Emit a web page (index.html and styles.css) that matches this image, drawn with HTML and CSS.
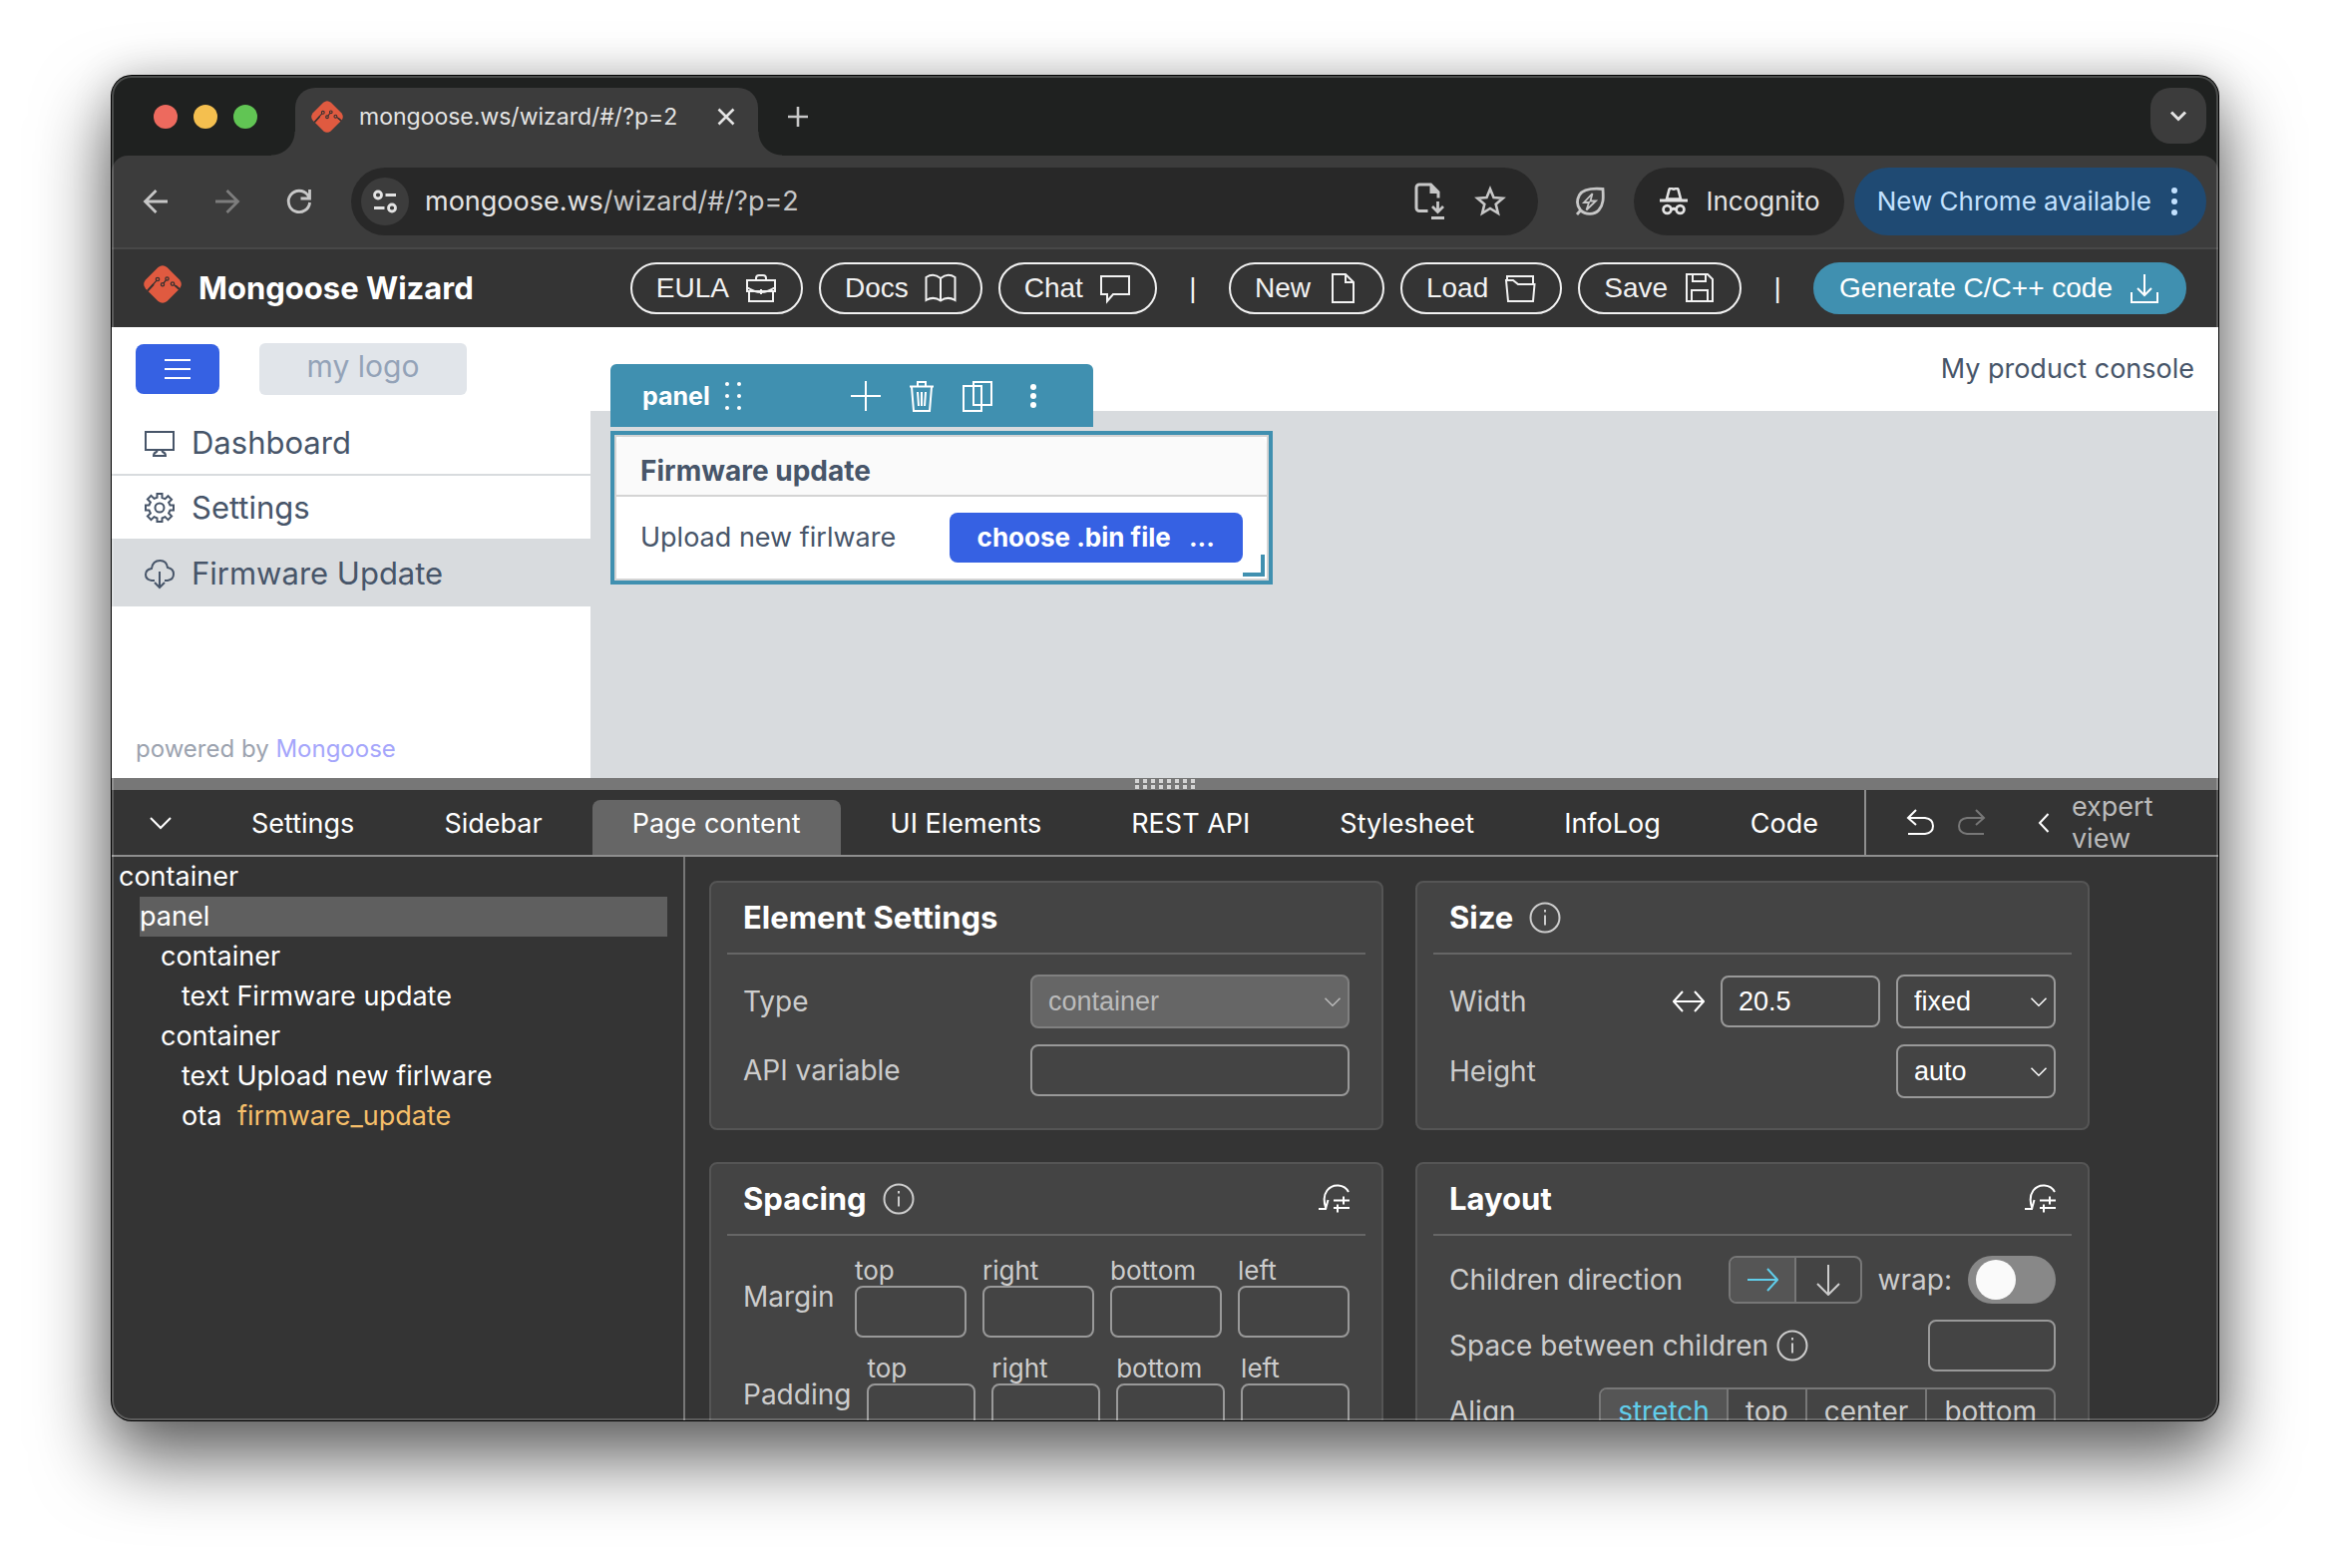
FILE: index.html
```html
<!DOCTYPE html>
<html lang="en">
<head>
<meta charset="utf-8">
<title>Mongoose Wizard</title>
<link rel="stylesheet" href="styles.css">
</head>
<body>
<svg class="sprite" aria-hidden="true">
  <symbol id="i-mongoose" viewBox="0 0 38 38">
    <path d="M14.500 2q4.500-3.600 9 0L36 14.500q3.600 4.500 0 9L23.500 36q-4.500 3.600-9 0L2 23.500q-3.600-4.500 0-9z" fill="#e05a40"/>
    <g fill="none" stroke="#3a3230" stroke-width="1.300">
      <path d="M4 25.500 12.800 15.300M20 18l2.400-3.200M30.500 19.500l5 4.500"/>
      <path d="M4 25.500l6-6.500M32 20.500l4 3.500" stroke-width="1.900"/>
      <circle cx="14" cy="14" r="1.700"/><circle cx="19" cy="19.300" r="1.600"/><circle cx="23.500" cy="13.400" r="1.600"/><circle cx="29" cy="18.600" r="1.700"/>
    </g>
  </symbol>
  <symbol id="i-info" viewBox="0 0 32 32"><g fill="none" stroke="currentColor" stroke-width="2"><circle cx="16" cy="16" r="14.500"/><path d="M16 13.500V23.500M16 8v2.500"/></g></symbol>
  <symbol id="i-reset" viewBox="0 0 32 32"><path d="M31 9C27 1 15 0 9.500 7.500 5.500 13 6 19 8.500 26M1 26h7l2.500-9M16 17.500h16M26 13.500v8M16 25h16M20 21.500v8" fill="none" stroke="currentColor" stroke-width="2"/></symbol>
  <symbol id="i-chev" viewBox="0 0 24 14"><path d="M2 2l10 10L22 2" fill="none" stroke="currentColor" stroke-width="2"/></symbol>
</svg>

<div class="window">
  <div class="chrome">
  <header class="tabstrip">
    <div class="lights"><span class="light red"></span><span class="light yellow"></span><span class="light green"></span></div>
    <div class="browser-tab">
      <svg class="s32"><use href="#i-mongoose"/></svg>
      <span class="tab-title">mongoose.ws/wizard/#/?p=2</span>
      <button class="plain" aria-label="Close tab"><svg class="s24" viewBox="0 0 24 24"><path d="M4.500 4.500l15 15M19.500 4.500l-15 15" stroke="#e3e3e3" stroke-width="2.600"/></svg></button>
    </div>
    <button class="plain new-tab" aria-label="New tab"><svg class="s24" viewBox="0 0 24 24"><path d="M2 12h20M12 2v20" stroke="#c7c7c7" stroke-width="2.600"/></svg></button>
    <button class="tab-search" aria-label="Search tabs"><svg class="s24" viewBox="0 0 24 24"><path d="M5 8.500l7 7 7-7" fill="none" stroke="#e3e3e3" stroke-width="3"/></svg></button>
  </header>

  <div class="toolbar">
    <nav class="nav-buttons">
      <button class="plain" aria-label="Back"><svg class="s32" viewBox="0 0 32 32"><path d="M28 16H6M16.500 5L5.500 16l11 11" fill="none" stroke="#c7c7c7" stroke-width="2.800"/></svg></button>
      <button class="plain" aria-label="Forward"><svg class="s32" viewBox="0 0 32 32"><path d="M4 16h22M15.500 5l11 11-11 11" fill="none" stroke="#7d7d7d" stroke-width="2.800"/></svg></button>
      <button class="plain" aria-label="Reload"><svg class="s32" viewBox="0 0 32 32"><path d="M26.600 17A10.700 10.700 0 1 1 24.500 9.500L26 12M26.500 4v9h-9" fill="none" stroke="#c7c7c7" stroke-width="2.800"/></svg></button>
    </nav>
    <div class="omnibox">
      <button class="site-info" aria-label="Site information"><svg class="s28" viewBox="0 0 28 28"><g fill="none" stroke="#e3e3e3" stroke-width="2.800"><circle cx="7" cy="7.500" r="3.500"/><path d="M14.500 7.500H25M3 20.500h10.500"/><circle cx="21" cy="20.500" r="3.500"/></g></svg></button>
      <span class="url">mongoose.ws<span class="url-path">/wizard/#/?p=2</span></span>
      <button class="plain" aria-label="Install page"><svg class="page-icon" viewBox="0 0 32 38"><path d="M14.500 28.600H6a3 3 0 0 1-3-3V5a3 3 0 0 1 3-3h11.500l7.500 7.500v6" fill="none" stroke="#c7c7c7" stroke-width="3"/><path d="M16.500 1v10H26z" fill="#c7c7c7"/><path d="M24.500 19v10M19 24l5.500 5.500L30 24M18 35.500h13" fill="none" stroke="#c7c7c7" stroke-width="2.800"/></svg></button>
      <button class="plain" aria-label="Bookmark"><svg class="s32" viewBox="0 0 32 32"><path d="M16 3.500l3.500 8.600 9.200.7-7 6 2.200 9L16 23l-7.900 4.800 2.200-9-7-6 9.200-.7z" fill="none" stroke="#c7c7c7" stroke-width="2.600"/></svg></button>
    </div>
    <button class="plain saver" aria-label="Energy saver"><svg class="s32" viewBox="0 0 32 32"><g fill="none" stroke="#c7c7c7" stroke-width="2.800"><path d="M29 3.500c-12-1-20 0-23.500 6C2 16 4 21.500 6.500 24.500c5 5.500 14 5 18.500 0 5-6 4.500-12 4-21zM3 29l4-4.500"/></g><path d="M18.500 8L10 17h5l-2.500 7.500L22 15.500h-5.500z" fill="none" stroke="#c7c7c7" stroke-width="1.800"/></svg></button>
    <div class="incognito"><svg class="s28" viewBox="0 0 28 28"><path d="M7 11.500L9.500 2q.6-1.600 2.300-1l2.200.7 2.200-.7q1.700-.6 2.300 1L21 11.500z" fill="none" stroke="#e3e3e3" stroke-width="2.600"/><g fill="none" stroke="#e3e3e3" stroke-width="2.800"><path d="M0 13h28M11.500 22q2.500-1.500 5 0"/><circle cx="7.500" cy="22" r="3.900"/><circle cx="20.500" cy="22" r="3.900"/></g></svg><span>Incognito</span></div>
    <button class="update">New Chrome available<svg class="dots3" viewBox="0 0 8 28"><g fill="#c2e1ff"><circle cx="4" cy="3" r="3"/><circle cx="4" cy="14" r="3"/><circle cx="4" cy="25" r="3"/></g></svg></button>
  </div>
  </div>

  <header class="app-header">
    <svg class="s38 brand"><use href="#i-mongoose"/></svg>
    <h1>Mongoose Wizard</h1>
    <div class="actions">
      <button class="pill">EULA<svg class="s32 line" viewBox="0 0 32 32"><path d="M2 8h28v11H2zM4 19v10h24V19M11 8V6q0-3 3-3h4q3 0 3 3v2M2 15q14 10 28 0M16 17v5"/></svg></button>
      <button class="pill">Docs<svg class="s32 line" viewBox="0 0 32 32"><path d="M16 6Q9 0 1.500 5v23Q9 23.500 16 28.500 23 23.500 30.500 28V5Q23 0 16 6zV28"/></svg></button>
      <button class="pill">Chat<svg class="s32 line" viewBox="0 0 32 32"><path d="M2 4h28v18H14l-6 7v-7H2z"/></svg></button>
      <span class="bar">|</span>
      <button class="pill">New<svg class="s32 line" viewBox="0 0 32 32"><path d="M6 2h13l8 8v20H6zM19 2v8h8"/></svg></button>
      <button class="pill">Load<svg class="s32 line" viewBox="0 0 32 32"><path d="M3 8V4h26v7M2 8h7l5 4h16.500L29 29H4z"/></svg></button>
      <button class="pill">Save<svg class="s32 line" viewBox="0 0 32 32"><path d="M3 2h21l5 5v22H3zM9 2v7h13V2M8 29V18h16v11"/></svg></button>
      <span class="bar">|</span>
      <button class="pill primary">Generate C/C++ code<svg class="s32 line" viewBox="0 0 32 32"><path d="M16 2v21M9 16l7 7 7-7M3 20v10h26V20"/></svg></button>
    </div>
  </header>

  <section class="preview">
    <div class="preview-side">
      <div class="side-top">
        <button class="menu-btn" aria-label="Menu"><svg class="s28" viewBox="0 0 28 28"><path d="M1 5h26M1 14h26M1 23h26" stroke="#fff" stroke-width="2"/></svg></button>
        <div class="logo-box">my logo</div>
      </div>
      <nav class="side-nav">
        <a href="#dashboard"><svg class="s32 line" viewBox="0 0 32 32"><path d="M2 5h28v18H2zM10 29q0-3 3-4l1-2h4l1 2q3 1 3 4z"/></svg>Dashboard</a>
        <a href="#settings"><svg class="s32 line" viewBox="0 0 32 32"><path d="M13.500 2h5v4l3 1.200 3-3 3.600 3.600-3 3L26.500 13.500H30v5h-3.500l-1.400 3 3 3-3.600 3.600-3-3-3 1.400V30h-5v-3.500l-3-1.400-3 3-3.600-3.600 3-3-1.400-3H2v-5h3.500l1.400-3-3-3 3.600-3.600 3 3 3-1.200z"/><circle cx="16" cy="16" r="4.500"/></svg>Settings</a>
        <a href="#update" class="active"><svg class="s32 line" viewBox="0 0 32 32"><path d="M11 23H8Q2 22 2 17q0-5 6-6 1-8 8.500-8Q23 3 24 10q6 1 6 6.500Q30 22 24 23h-3M16 14v16M11 25l5 5 5-5"/></svg>Firmware Update</a>
      </nav>
      <p class="powered">powered by <a href="#mongoose">Mongoose</a></p>
    </div>
    <div class="preview-main">
      <div class="console-bar">My product console</div>
      <div class="canvas">
        <div class="selected">
          <div class="el-toolbar">
            <b>panel</b>
            <svg class="grip" viewBox="0 0 20 32"><g fill="#fff"><circle cx="4" cy="4" r="2"/><circle cx="16" cy="4" r="2"/><circle cx="4" cy="16" r="2"/><circle cx="16" cy="16" r="2"/><circle cx="4" cy="28" r="2"/><circle cx="16" cy="28" r="2"/></g></svg>
            <button class="plain first" aria-label="Add"><svg class="s32 line" viewBox="0 0 32 32"><path d="M1 16h30M16 1v30"/></svg></button>
            <button class="plain" aria-label="Delete"><svg class="s32 line" viewBox="0 0 32 32"><path d="M4 6.500h24M12 6V2h8v4M6 7l2 24h16l2-24M12 12l1 14M16 12v14M20 12l-1 14"/></svg></button>
            <button class="plain" aria-label="Duplicate"><svg class="s32 line" viewBox="0 0 32 32"><path d="M2 6h18v25H2zM12 2h18v23H12z"/></svg></button>
            <button class="plain" aria-label="More"><svg class="s32" viewBox="0 0 32 32"><g fill="#fff"><circle cx="16" cy="7" r="3"/><circle cx="16" cy="16" r="3"/><circle cx="16" cy="25" r="3"/></g></svg></button>
          </div>
          <div class="ui-panel">
            <div class="ui-panel-head">Firmware update</div>
            <div class="ui-panel-body"><span>Upload new firlware</span><button class="file-btn">choose .bin file <span>...</span></button></div>
            <span class="resize"></span>
          </div>
        </div>
      </div>
    </div>
  </section>

  <div class="splitter"><span class="splitter-grip"></span></div>

  <nav class="tabs">
    <button class="plain collapse" aria-label="Collapse"><svg class="chev"><use href="#i-chev"/></svg></button>
    <button class="tab">Settings</button>
    <button class="tab">Sidebar</button>
    <button class="tab current">Page content</button>
    <button class="tab">UI Elements</button>
    <button class="tab">REST API</button>
    <button class="tab">Stylesheet</button>
    <button class="tab">InfoLog</button>
    <button class="tab">Code</button>
    <div class="history">
      <button class="plain" aria-label="Undo"><svg class="s28 line" viewBox="0 0 28 28"><path d="M10 1L2 9l8 7M2 9h17q8 1 8 8t-8 8H2"/></svg></button>
      <button class="plain dim" aria-label="Redo"><svg class="s28 line" viewBox="0 0 28 28"><path d="M18 1l8 8-8 7M26 9H9q-8 1-8 8t8 8h17"/></svg></button>
      <button class="plain expert"><svg class="back" viewBox="0 0 12 20"><path d="M10.500 1L2 10l8.500 9" fill="none" stroke="#fff" stroke-width="2"/></svg><span>expert<br>view</span></button>
    </div>
  </nav>

  <main class="editor">
    <ul class="tree">
      <li>container</li>
      <li class="d1 sel">panel</li>
      <li class="d2">container</li>
      <li class="d3">text Firmware update</li>
      <li class="d2">container</li>
      <li class="d3">text Upload new firlware</li>
      <li class="d3">ota <span class="var">firmware_update</span></li>
    </ul>
    <div class="cards">
      <section class="card">
        <h2>Element Settings</h2>
        <div class="row"><label for="type">Type</label><span class="select wide disabled"><select id="type" disabled><option>container</option></select><svg class="chev-s"><use href="#i-chev"/></svg></span></div>
        <div class="row"><label for="api">API variable</label><input class="field wide" id="api" type="text"></div>
      </section>
      <section class="card">
        <h2>Size <svg class="s32 info"><use href="#i-info"/></svg></h2>
        <div class="row"><label for="width">Width</label><svg class="s32 line" viewBox="0 0 32 32"><path d="M1 16h30M10 6L1 16l9 10M22 6l9 10-9 10"/></svg><input class="field mid" id="width" type="text" value="20.5"><span class="select mid"><select aria-label="Width mode"><option>fixed</option></select><svg class="chev-s"><use href="#i-chev"/></svg></span></div>
        <div class="row"><label for="height">Height</label><span class="select mid"><select id="height"><option>auto</option></select><svg class="chev-s"><use href="#i-chev"/></svg></span></div>
      </section>
      <section class="card">
        <h2>Spacing <svg class="s32 info"><use href="#i-info"/></svg><svg class="s32 reset"><use href="#i-reset"/></svg></h2>
        <div class="sides"><span class="sides-name">Margin</span><label>top<input class="field" type="text"></label><label>right<input class="field" type="text"></label><label>bottom<input class="field" type="text"></label><label>left<input class="field" type="text"></label></div>
        <div class="sides"><span class="sides-name">Padding</span><label>top<input class="field" type="text"></label><label>right<input class="field" type="text"></label><label>bottom<input class="field" type="text"></label><label>left<input class="field" type="text"></label></div>
      </section>
      <section class="card">
        <h2>Layout<svg class="s32 reset"><use href="#i-reset"/></svg></h2>
        <div class="row"><span class="name">Children direction</span><div class="seg icons"><button class="on" aria-label="Row"><svg class="s32 line" viewBox="0 0 32 32"><path d="M1 16h30M21 5l10 11-10 11"/></svg></button><button aria-label="Column"><svg class="s32 line" viewBox="0 0 32 32"><path d="M16 1v30M5 20l11 11 11-11"/></svg></button></div><label for="wrap">wrap:</label><input class="toggle" id="wrap" type="checkbox"></div>
        <div class="row"><label for="gap">Space between children <svg class="s32 info"><use href="#i-info"/></svg></label><input class="field small" id="gap" type="text"></div>
        <div class="row"><span class="name">Align</span><div class="seg"><button class="on">stretch</button><button>top</button><button>center</button><button>bottom</button></div></div>
      </section>
    </div>
  </main>
</div>
</body>
</html>
```
FILE: styles.css
```css
* { box-sizing: border-box; }
body {
  margin: 0;
  height: 100vh;
  padding: 76px 112px 148px;
  background: #fff;
  font: 27px/32px Inter, "Liberation Sans", sans-serif;
  overflow: hidden;
}
button, input, select { font: inherit; color: inherit; margin: 0; }
button { cursor: pointer; white-space: nowrap; }
svg { display: block; flex: none; }
h1, h2, p, ul { margin: 0; padding: 0; }
a { color: inherit; text-decoration: none; }
.sprite { display: none; }
.s24 { width: 24px; height: 24px; }
.s28 { width: 28px; height: 28px; }
.s32 { width: 32px; height: 32px; }
.s38 { width: 38px; height: 38px; }
.line { fill: none; stroke: currentColor; stroke-width: 2; }
.plain { border: 0; padding: 0; background: none; display: flex; align-items: center; }

.window {
  position: relative;
  height: 100%;
  display: flex;
  flex-direction: column;
  border-radius: 20px;
  overflow: hidden;
  background: #343434;
  color: #fff;
  box-shadow: 0 0 0 1px #000, 0 36px 72px 4px rgba(0, 0, 0, .6), 0 0 40px rgba(0, 0, 0, .16);
}
.window::after { content: ""; position: absolute; inset: 0; border-radius: 20px; box-shadow: inset 0 0 0 2px rgba(255, 255, 255, .2); pointer-events: none; }

/* browser chrome */
.chrome { flex: none; background: #1f2120; }
.tabstrip { height: 80px; display: flex; align-items: flex-start; padding: 12px 12px 0 42px; }
.lights { display: flex; gap: 16px; padding-top: 17px; }
.light { width: 24px; height: 24px; border-radius: 50%; }
.red { background: #ed6a5e; }
.yellow { background: #f4bf4f; }
.green { background: #61c554; }
.browser-tab { position: relative; margin-left: 38px; width: 464px; height: 68px; border-radius: 20px 20px 0 0; background: #3c3c3c; display: flex; align-items: center; padding: 0 20px 10px 16px; }
.browser-tab::before, .browser-tab::after { content: ""; position: absolute; bottom: 0; width: 24px; height: 24px; }
.browser-tab::before { right: 100%; background: radial-gradient(circle at 0 0, transparent 23px, #3c3c3c 24px); }
.browser-tab::after { left: 100%; background: radial-gradient(circle at 100% 0, transparent 23px, #3c3c3c 24px); }
.tab-title { flex: 1; margin-left: 16px; font-size: 23px; color: #e3e3e3; }
.new-tab { margin: 17px 0 0 28px; }
.tab-search { margin-left: auto; width: 56px; height: 56px; border: 0; border-radius: 20px; background: #3c3c3c; display: grid; place-items: center; padding: 0; }
.toolbar { height: 94px; display: flex; align-items: center; background: #3c3c3c; border-bottom: 2px solid #484848; border-radius: 16px 16px 0 0; padding: 0 12px 0 28px; }
.nav-buttons { display: flex; gap: 40px; margin-right: 36px; }
.omnibox { flex: 1; height: 68px; border-radius: 34px; background: #282828; display: flex; align-items: center; padding: 0 32px 0 10px; }
.site-info { width: 48px; height: 48px; border: 0; padding: 0; border-radius: 50%; background: #3c3c3c; display: grid; place-items: center; }
.url { flex: 1; margin-left: 16px; color: #e3e3e3; }
.url-path { color: #c7c7c7; }
.page-icon { width: 32px; height: 38px; margin-right: 29px; }
.saver { margin: 0 28px 0 36px; }
.incognito { height: 68px; border-radius: 34px; background: #282828; display: flex; align-items: center; gap: 18px; padding: 0 24px 0 26px; font-size: 26px; color: #e3e3e3; margin-right: 10px; }
.update { height: 68px; border: 0; border-radius: 34px; background: #1f4a73; color: #c2e1ff; display: flex; align-items: center; gap: 19px; padding: 0 28px 0 23px; font-size: 26px; }
.dots3 { width: 8px; height: 28px; }

/* application header */
.app-header { flex: none; height: 78px; display: flex; align-items: center; padding: 0 32px; }
.brand { margin-bottom: 8px; }
.app-header h1 { font-size: 31px; line-height: 40px; font-weight: 700; margin-left: 17px; white-space: nowrap; }
.actions { margin-left: auto; display: flex; align-items: center; gap: 16px; font-family: "Liberation Sans", Arial, sans-serif; font-size: 28px; color: #f2f2f2; }
.pill { height: 52px; border: 2px solid #f2f2f2; border-radius: 26px; background: none; padding: 0 24px; display: flex; align-items: center; gap: 16px; }
.pill.primary { background: #4090b0; border-color: #4090b0; color: #fff; }
.bar { width: 40px; text-align: center; }

/* page preview */
.preview { flex: none; height: 452px; display: flex; background: #fff; color: #475569; }
.preview-side { width: 480px; flex: none; display: flex; flex-direction: column; }
.side-top { height: 84px; display: flex; align-items: center; gap: 40px; padding-left: 24px; }
.menu-btn { width: 84px; height: 50px; border: 0; padding: 0; border-radius: 8px; background: #3661e3; display: grid; place-items: center; }
.logo-box { width: 208px; height: 52px; border-radius: 6px; background: #e1e5ea; color: #94a3b8; font-size: 30px; line-height: 46px; text-align: center; }
.side-nav a { height: 65px; display: flex; align-items: center; gap: 16px; padding: 0 32px; font-size: 31px; border-bottom: 2px solid #d8dbde; }
.side-nav .active { height: 66px; border: 0; background: #d8dbde; }
.powered { margin-top: auto; padding: 0 24px 13px; font-size: 24px; color: #9ca3af; }
.powered a { color: #a5a6fb; }
.preview-main { flex: 1; display: flex; flex-direction: column; }
.console-bar { height: 84px; line-height: 84px; text-align: right; padding-right: 24px; }
.canvas { flex: 1; background: #d8dbde; padding: 20px; }
.selected { position: relative; width: 664px; }
.el-toolbar { position: absolute; left: 0; bottom: calc(100% + 4px); width: 484px; height: 63px; border-radius: 6px 6px 0 0; background: #4090b0; color: #fff; display: flex; align-items: center; gap: 24px; padding: 0 44px 0 32px; font-size: 25px; }
.grip { width: 20px; height: 32px; margin-left: -11px; }
.el-toolbar .first { margin-left: auto; }
.ui-panel { position: relative; border: 4px solid #4090b0; background: #fff; box-shadow: inset 0 0 0 2px #d4d4d4; padding: 2px; }
.ui-panel-head { height: 60px; line-height: 68px; background: #fafafa; border-bottom: 2px solid #d4d4d4; border-radius: 8px 8px 0 0; padding: 0 24px; font-size: 28px; font-weight: 700; }
.ui-panel-body { height: 82px; display: flex; align-items: center; justify-content: space-between; padding: 0 24px; }
.file-btn { height: 50px; border: 0; border-radius: 8px; background: #3661e3; color: #fff; font-weight: 700; font-size: 26px; padding: 0 28px; }
.file-btn span { margin-left: 12px; }
.resize { position: absolute; right: 4px; bottom: 4px; width: 22px; height: 22px; border: solid #4090b0; border-width: 0 4px 4px 0; }

/* splitter and tab bar */
.splitter { flex: none; height: 12px; background: #777; display: grid; place-items: center; }
.splitter-grip { width: 60px; height: 10px; background: repeating-linear-gradient(90deg, #d4d4d4 0 4px, transparent 4px 8px); mask: linear-gradient(#000 0 4px, transparent 4px 6px, #000 6px); }
.tabs { flex: none; height: 67px; display: flex; align-items: flex-end; gap: 10px; border-bottom: 2px solid #8e8e8e; padding-left: 36px; }
.collapse { width: 54px; height: 65px; }
.chev { width: 26px; height: 14px; }
.tab { height: 55px; border: 0; background: none; padding: 0 40px 8px; border-radius: 8px 8px 0 0; }
.tab.current { background: #666; }
.history { flex: 1; align-self: stretch; margin-left: -4px; border-left: 2px solid #8e8e8e; display: flex; align-items: center; gap: 24px; padding-left: 40px; }
.dim { color: #777; }
.expert { margin-left: 28px; gap: 22px; color: #bbb; text-align: left; }
.back { width: 12px; height: 20px; }

/* editor */
.editor { flex: 1; min-height: 0; display: flex; }
.tree { width: 575px; flex: none; list-style: none; border-right: 2px solid #777; padding-right: 16px; line-height: 40px; }
.tree li { margin-left: 7px; }
.tree .d1 { margin-left: 28px; }
.tree .d2 { margin-left: 49px; }
.tree .d3 { margin-left: 70px; }
.tree .sel { background: #5f5f5f; }
.var { color: #f6bf6a; margin-left: 8px; }
.cards { flex: 1; min-width: 0; max-width: 1408px; padding: 24px 0 0 24px; display: grid; grid-template-columns: repeat(2, minmax(0, 1fr)); grid-auto-rows: max-content; gap: 32px; color: #ccc; font-size: 28px; }
.card { border: 2px solid #555; border-radius: 8px; background: #444; padding: 0 32px 14px; }
.card h2 { height: 72px; display: flex; align-items: center; gap: 16px; margin: 0 -16px 20px; padding: 0 16px; border-bottom: 2px solid #666; color: #fff; font-size: 31px; font-weight: 700; }
.info { color: #ccc; }
.reset { margin-left: auto; }
.row { display: flex; align-items: center; gap: 16px; margin-bottom: 16px; }
.row > label:first-child, .name { flex: 1; display: flex; align-items: center; gap: 8px; white-space: nowrap; }
.row .line { color: #fff; }
.field { width: 100%; height: 52px; min-width: 0; border: 2px solid #999; border-radius: 8px; background: none; color: #fff; padding: 0 16px; font: 27px "Liberation Sans", Arial, sans-serif; }
.select { position: relative; height: 54px; border: 2px solid #999; border-radius: 8px; color: #fff; }
.select select { appearance: none; width: 100%; height: 100%; border: 0; background: none; padding: 0 16px; font: 27px "Liberation Sans", Arial, sans-serif; opacity: 1; }
.chev-s { position: absolute; right: 6px; top: 20px; width: 18px; height: 11px; pointer-events: none; }
.select.disabled { background: #666; border-color: #808080; color: #bbb; }
.wide { width: 320px; }
.mid { width: 160px; }
.small { width: 128px; }
.sides { display: flex; align-items: center; gap: 16px; margin-bottom: 16px; }
.sides-name { min-width: 96px; }
.sides label { flex: 1; min-width: 0; display: flex; flex-direction: column; line-height: 30px; font-size: 26px; }
.seg { display: flex; border: 2px solid #777; border-radius: 8px; overflow: hidden; }
.seg button { height: 44px; border: 0; border-right: 2px solid #777; background: none; padding: 0 17px; color: #ccc; }
.seg button:last-child { border-right: 0; }
.seg .on { background: #555; color: #60cdea; }
.seg .line { color: inherit; }
.seg.icons button { width: 66px; display: grid; place-items: center; padding: 0; }
.seg.icons button:last-child { width: 64px; }
.toggle { appearance: none; width: 88px; height: 48px; border-radius: 24px; background: #888; padding: 4px 8px; }
.toggle::before { content: ""; display: block; width: 40px; height: 40px; border-radius: 50%; background: #fafafa; }
```
